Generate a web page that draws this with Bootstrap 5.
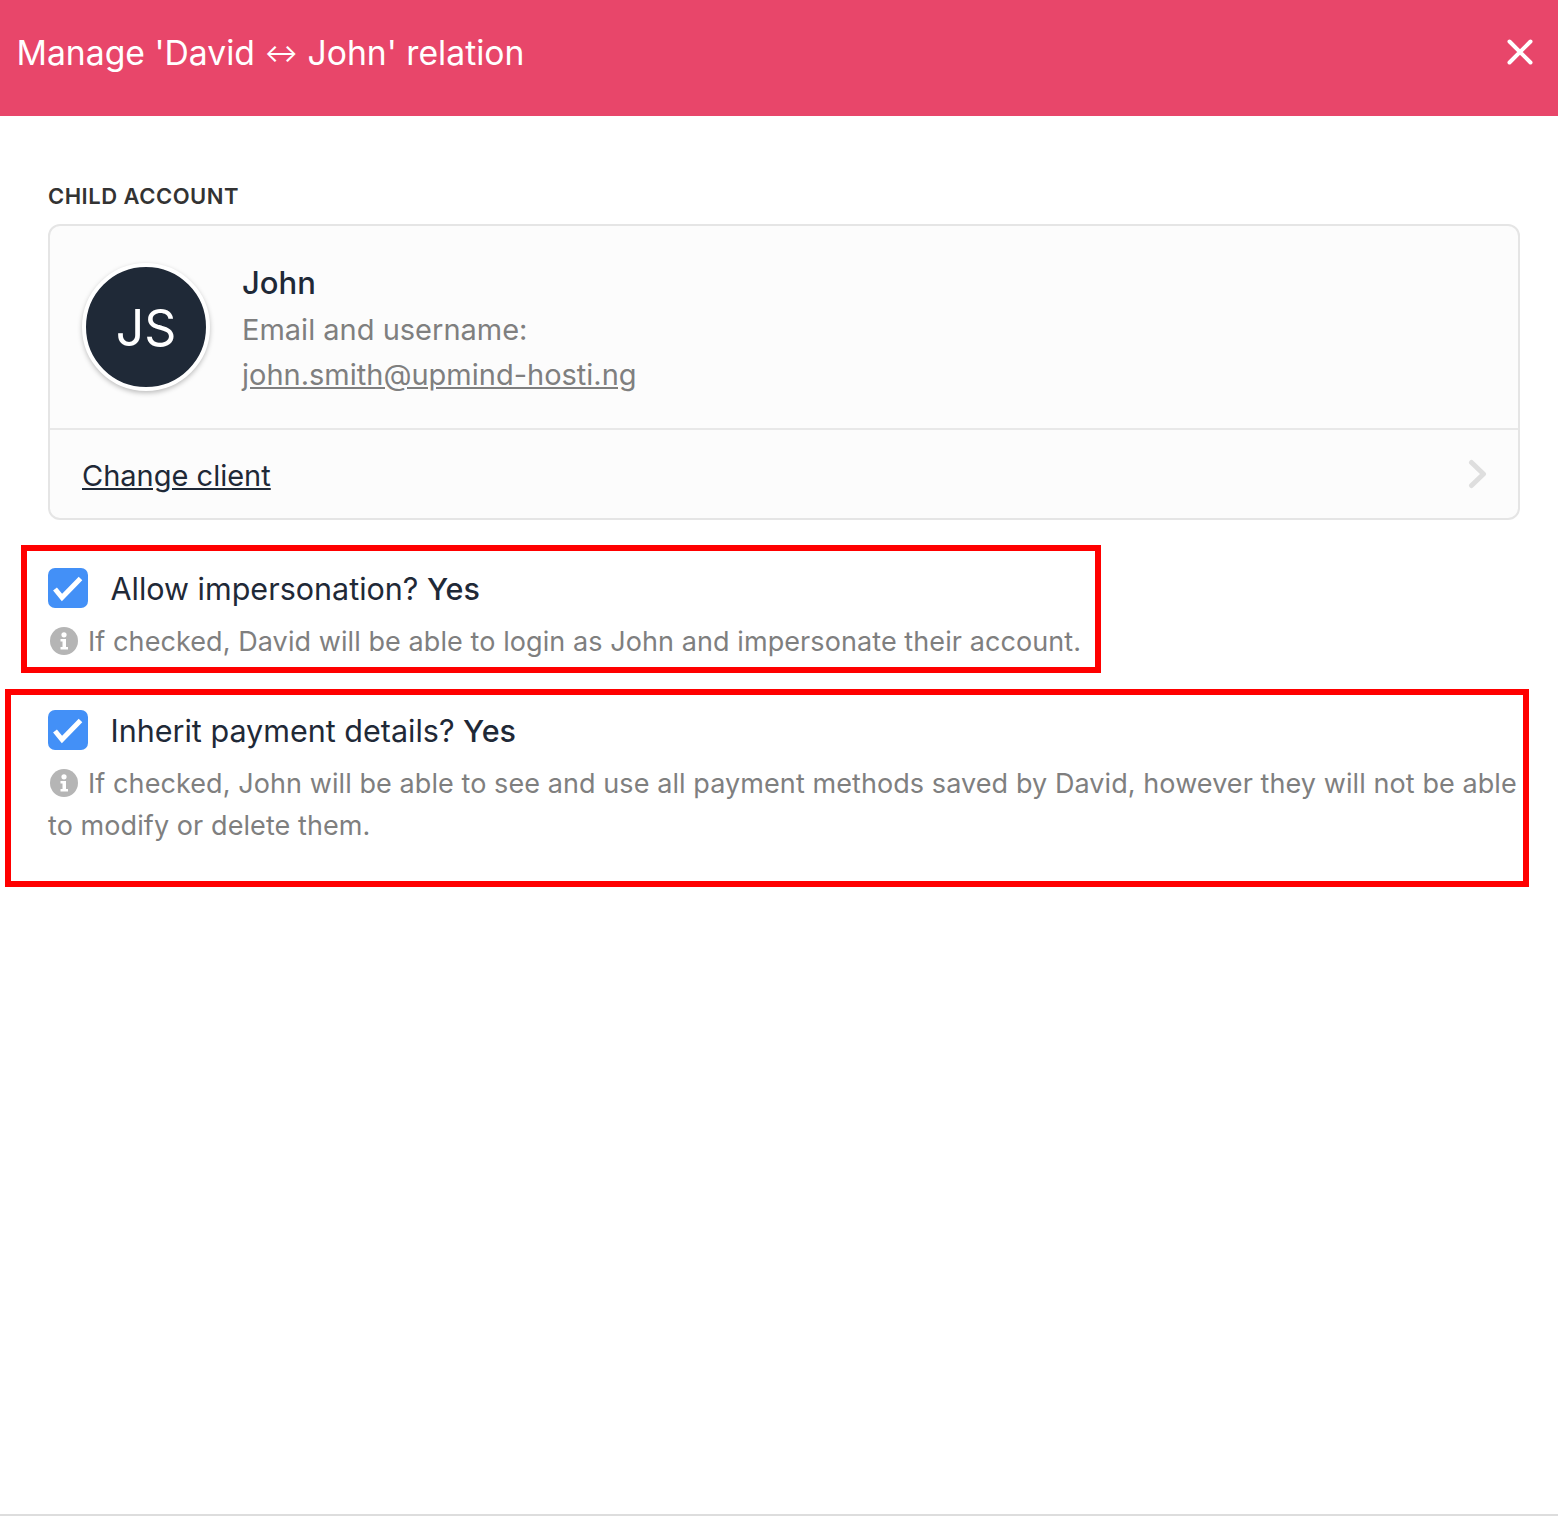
<!DOCTYPE html>
<html lang="en"><head><meta charset="utf-8"><title>Manage relation</title>
<link href="https://cdn.jsdelivr.net/npm/bootstrap@5.3.0/dist/css/bootstrap.min.css" rel="stylesheet">
<style>
html,body{height:1524px;overflow:hidden;background:#fff}
body{font-family:Inter,"Liberation Sans",sans-serif;color:#1f2937}
.page-shell{height:1516px;border-bottom:2px solid #ddd}
.top-head{height:116px;background:#e8466a;color:#fff;padding:0 25px 10px 16.5px}
.top-head h1{font-size:33.7px;font-weight:400;margin:0;line-height:44px}
.arrow-mini{font-size:25px;vertical-align:3px}
.x-btn{width:26px;height:26px;border:0;background:none;padding:0;display:block;margin-bottom:3px}
.body-pad{padding:66px 38px 0 48px}
.sec-label{font-size:22px;font-weight:600;letter-spacing:.5px;color:#333;line-height:28px;margin-bottom:14px}
.acct-card{border:2px solid #e5e5e5;border-radius:12px;background:#fcfcfc;height:296px}
.acct-top{height:204px;padding:37px 32px 0;border-bottom:2px solid #e8e8e8;gap:32px}
.avatar-ring{width:128px;height:128px;flex:none;border-radius:50%;background:#1f2937;border:4px solid #fff;box-shadow:0 2px 5px rgba(0,0,0,.25);color:#fff;font-size:50px;line-height:1;padding-top:2px}
.acct-text{padding-top:1px}
.acct-name{font-size:31px;line-height:38px;font-weight:500;margin-bottom:6px}
.acct-meta{font-size:29px;line-height:44.5px;color:#7f7f7f}
.acct-meta a{color:inherit}
.acct-foot{height:88px;padding:0 32px;font-size:29px}
.acct-foot a{color:#1f2937;padding-top:3px}
.acct-foot svg{margin-right:-2px}
.opt-wrap{position:relative}
.opt-one{margin-top:48px;height:96px}
.opt-two{margin-top:46px;height:134px}
.chk-box{width:40px;height:40px;flex:none;border-radius:7px;background:#4390f7;margin-right:22.5px}
.opt-title{font-size:30.5px;line-height:40px;font-weight:400;padding-top:1px}
.opt-title b{font-weight:500}
.opt-desc{font-size:27px;line-height:42px;color:#7f7f7f;letter-spacing:.08px;margin:12px -6px 0 0}
.opt-desc svg{vertical-align:-4px;margin:0 10px 0 2px}
.mark-frame{position:absolute;border:6px solid #f00;pointer-events:none}
.mark-a{left:-27px;top:-23px;width:1080px;height:128px}
.mark-b{left:-43px;top:-21px;width:1524px;height:198px}
</style></head><body>
<div class="page-shell">
<header class="top-head d-flex align-items-center justify-content-between">
<h1>Manage 'David <span class="arrow-mini">↔</span> John' relation</h1>
<button class="x-btn" aria-label="Close"><svg width="26" height="26" viewBox="0 0 26 26"><path d="M2.5 2.5 23.5 23.5M23.5 2.5 2.5 23.5" stroke="#fff" stroke-width="4" stroke-linecap="round"/></svg></button>
</header>
<main class="body-pad">
<div class="sec-label">CHILD ACCOUNT</div>
<section class="acct-card">
<div class="acct-top d-flex">
<div class="avatar-ring d-flex align-items-center justify-content-center">JS</div>
<div class="acct-text">
<div class="acct-name">John</div>
<div class="acct-meta">Email and username:<br><a href="#">john.smith@upmind-hosti.ng</a></div>
</div>
</div>
<div class="acct-foot d-flex align-items-center justify-content-between">
<a href="#">Change client</a>
<svg width="20" height="30" viewBox="0 0 20 30"><path d="M3.5 3.5 15.5 15 3.5 26.5" fill="none" stroke="#dedede" stroke-width="5" stroke-linecap="round" stroke-linejoin="round"/></svg>
</div>
</section>
<section class="opt-wrap opt-one">
<div class="d-flex align-items-start">
<span class="chk-box d-flex align-items-center justify-content-center"><svg width="40" height="40" viewBox="0 0 40 40"><path d="M7 21 14 29.5 32.5 10.5" fill="none" stroke="#fff" stroke-width="5"/></svg></span>
<div class="opt-title">Allow impersonation? <b>Yes</b></div>
</div>
<div class="opt-desc"><svg width="28" height="28" viewBox="0 0 28 28"><circle cx="14" cy="14" r="14" fill="#b5b5b5"/><circle cx="14" cy="7.8" r="2.6" fill="#fff"/><path d="M10.5 12h5.5v8h2v2.6h-7.5V20h2v-5.4h-2z" fill="#fff"/></svg>If checked, David will be able to login as John and impersonate their account.</div>
<div class="mark-frame mark-a"></div>
</section>
<section class="opt-wrap opt-two">
<div class="d-flex align-items-start">
<span class="chk-box d-flex align-items-center justify-content-center"><svg width="40" height="40" viewBox="0 0 40 40"><path d="M7 21 14 29.5 32.5 10.5" fill="none" stroke="#fff" stroke-width="5"/></svg></span>
<div class="opt-title">Inherit payment details? <b>Yes</b></div>
</div>
<div class="opt-desc"><svg width="28" height="28" viewBox="0 0 28 28"><circle cx="14" cy="14" r="14" fill="#b5b5b5"/><circle cx="14" cy="7.8" r="2.6" fill="#fff"/><path d="M10.5 12h5.5v8h2v2.6h-7.5V20h2v-5.4h-2z" fill="#fff"/></svg>If checked, John will be able to see and use all payment methods saved by David, however they will not be able to modify or delete them.</div>
<div class="mark-frame mark-b"></div>
</section>
</main>
</div>
</body></html>
